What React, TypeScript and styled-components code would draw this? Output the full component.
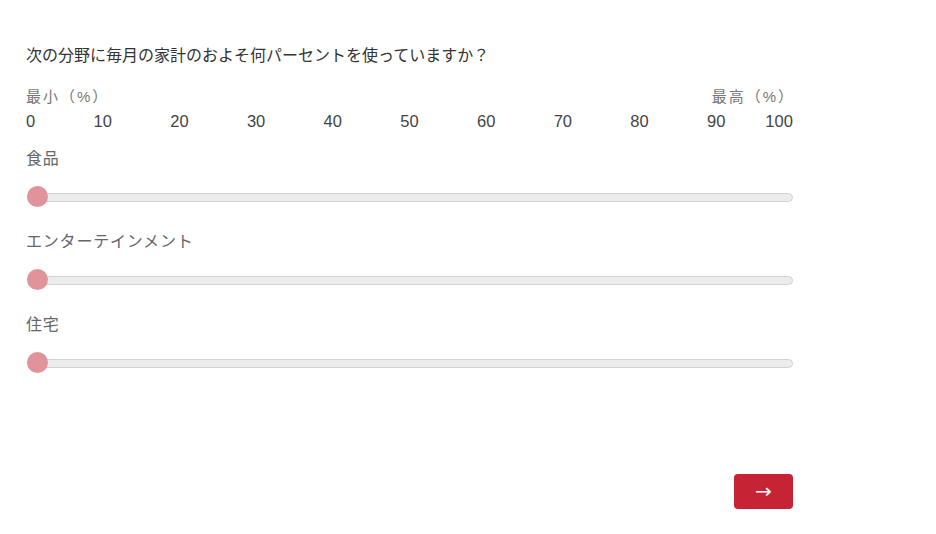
import React from "react";
import styled, { createGlobalStyle } from "styled-components";

const Global = createGlobalStyle`
  html, body { margin: 0; padding: 0; background: #fff; }
  body { font-family: "Liberation Sans", Arial, "Noto Sans CJK JP", sans-serif; }
`;

const Page = styled.div`
  width: 767px;
  padding: 44px 0 0 26px;
`;

const Question = styled.div`
  font-size: 16px;
  line-height: 24px;
  color: #333;
`;

const ScaleHeader = styled.div`
  display: flex;
  justify-content: space-between;
  margin-top: 19px;
  font-size: 15px;
  line-height: 20px;
  color: #777;
  letter-spacing: 2px;
`;

const MaxLabel = styled.span`
  margin-right: -2px;
`;

const Ticks = styled.div`
  display: flex;
  justify-content: space-between;
  margin-top: 4px;
  height: 20px;
`;

const Tick = styled.div<{ $align: "start" | "center" | "end" }>`
  width: 0;
  display: flex;
  justify-content: ${(p) =>
    p.$align === "start" ? "flex-start" : p.$align === "end" ? "flex-end" : "center"};
  font-size: 16.5px;
  line-height: 20px;
  color: #444;
  white-space: nowrap;
`;

const Rows = styled.div`
  margin-top: 17px;
`;

const Row = styled.div`
  display: flex;
  flex-direction: column;
  margin-bottom: 22px;
`;

const Label = styled.div`
  font-size: 16px;
  line-height: 21px;
  color: #666;
  letter-spacing: 0.8px;
`;

const SliderBox = styled.div`
  margin-top: 16px;
  height: 24px;
  display: flex;
  align-items: center;
  position: relative;
`;

const Track = styled.div`
  flex: 1;
  margin-left: 1px;
  height: 7px;
  border: 1px solid #d2d2d2;
  background: #ececec;
  border-radius: 5px;
`;

const Thumb = styled.div`
  position: absolute;
  left: 1px;
  top: 1px;
  width: 21px;
  height: 21px;
  border-radius: 50%;
  background: #e0939b;
`;

const Footer = styled.div`
  display: flex;
  justify-content: flex-end;
  margin-top: 99px;
`;

const NextButton = styled.button`
  width: 59px;
  height: 35px;
  border: none;
  border-radius: 4px;
  background: #c62334;
  color: #fff;
  font-size: 20px;
  line-height: 35px;
  padding: 0;
  font-family: "DejaVu Sans", sans-serif;
  cursor: pointer;
`;

const ticks = [0, 10, 20, 30, 40, 50, 60, 70, 80, 90, 100];
const categories = ["食品", "エンターテインメント", "住宅"];

export default function App() {
  return (
    <>
      <Global />
      <Page>
        <Question>次の分野に毎月の家計のおよそ何パーセントを使っていますか？</Question>
        <ScaleHeader>
          <span>最小（%）</span>
          <MaxLabel>最高（%）</MaxLabel>
        </ScaleHeader>
        <Ticks>
          {ticks.map((t, i) => (
            <Tick
              key={t}
              $align={i === 0 ? "start" : i === ticks.length - 1 ? "end" : "center"}
            >
              {t}
            </Tick>
          ))}
        </Ticks>
        <Rows>
          {categories.map((c) => (
            <Row key={c}>
              <Label>{c}</Label>
              <SliderBox>
                <Track />
                <Thumb />
              </SliderBox>
            </Row>
          ))}
        </Rows>
        <Footer>
          <NextButton>→</NextButton>
        </Footer>
      </Page>
    </>
  );
}
